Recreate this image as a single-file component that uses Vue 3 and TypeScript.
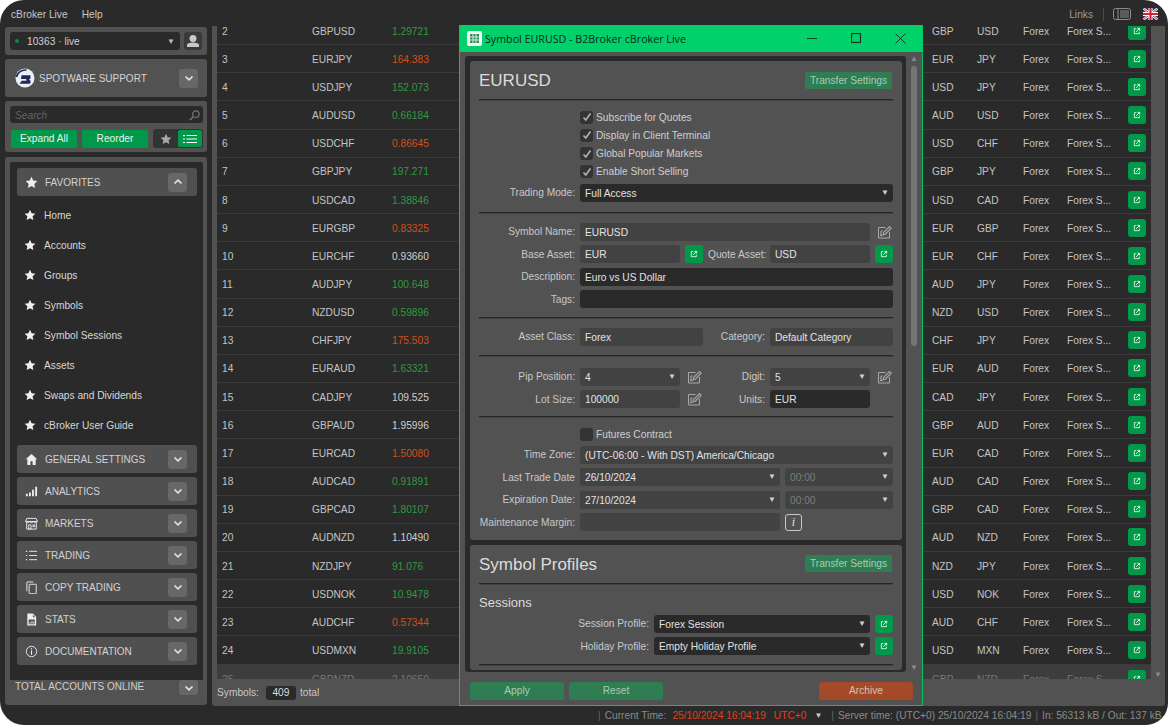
<script setup lang="ts">
interface Quote {
  id: number;
  symbol: string;
  price: string;
  dir: 'up' | 'down' | 'flat';
}

const quotes: Quote[] = [
  { id: 2, symbol: 'GBPUSD', price: '1.29721', dir: 'up' },
  { id: 3, symbol: 'EURJPY', price: '164.383', dir: 'down' },
  { id: 4, symbol: 'USDJPY', price: '152.073', dir: 'up' },
  { id: 5, symbol: 'AUDUSD', price: '0.66184', dir: 'up' },
  { id: 6, symbol: 'USDCHF', price: '0.86645', dir: 'down' },
  { id: 7, symbol: 'GBPJPY', price: '197.271', dir: 'up' },
  { id: 8, symbol: 'USDCAD', price: '1.38846', dir: 'up' },
  { id: 9, symbol: 'EURGBP', price: '0.83325', dir: 'down' },
  { id: 10, symbol: 'EURCHF', price: '0.93660', dir: 'flat' },
  { id: 11, symbol: 'AUDJPY', price: '100.648', dir: 'up' },
  { id: 12, symbol: 'NZDUSD', price: '0.59896', dir: 'up' },
  { id: 13, symbol: 'CHFJPY', price: '175.503', dir: 'down' },
  { id: 14, symbol: 'EURAUD', price: '1.63321', dir: 'up' },
  { id: 15, symbol: 'CADJPY', price: '109.525', dir: 'flat' },
  { id: 16, symbol: 'GBPAUD', price: '1.95996', dir: 'flat' },
  { id: 17, symbol: 'EURCAD', price: '1.50080', dir: 'down' },
  { id: 18, symbol: 'AUDCAD', price: '0.91891', dir: 'up' },
  { id: 19, symbol: 'GBPCAD', price: '1.80107', dir: 'up' },
  { id: 20, symbol: 'AUDNZD', price: '1.10490', dir: 'flat' },
  { id: 21, symbol: 'NZDJPY', price: '91.076', dir: 'up' },
  { id: 22, symbol: 'USDNOK', price: '10.9478', dir: 'up' },
  { id: 23, symbol: 'AUDCHF', price: '0.57344', dir: 'down' },
  { id: 24, symbol: 'USDMXN', price: '19.9105', dir: 'up' },
  { id: 25, symbol: 'GBPNZD', price: '2.10650', dir: 'flat' },
];

const favorites = [
  'Home',
  'Accounts',
  'Groups',
  'Symbols',
  'Symbol Sessions',
  'Assets',
  'Swaps and Dividends',
  'cBroker User Guide',
];

const sections = [
  { name: 'GENERAL SETTINGS', icon: 'i-home' },
  { name: 'ANALYTICS', icon: 'i-bars' },
  { name: 'MARKETS', icon: 'i-store' },
  { name: 'TRADING', icon: 'i-list' },
  { name: 'COPY TRADING', icon: 'i-copy' },
  { name: 'STATS', icon: 'i-file' },
  { name: 'DOCUMENTATION', icon: 'i-info' },
];

const checks = ['Subscribe for Quotes', 'Display in Client Terminal', 'Global Popular Markets', 'Enable Short Selling'];
</script>

<template>
  <div class="window">
    <!-- shared icons -->
    <svg class="sprite" aria-hidden="true">
      <symbol id="i-star" viewBox="0 0 24 24">
        <path fill="currentColor" d="M12 1.5l3.2 7 7.6.9-5.6 5.2 1.5 7.6L12 18.4l-6.7 3.8 1.5-7.6L1.200 9.400l7.600-.9z" />
      </symbol>
      <symbol id="i-down" viewBox="0 0 12 12">
        <path fill="none" stroke="currentColor" stroke-width="1.700" d="M2.500 4.500L6 7.800l3.500-3.300" />
      </symbol>
      <symbol id="i-up" viewBox="0 0 12 12">
        <path fill="none" stroke="currentColor" stroke-width="1.700" d="M2.500 7.500L6 4.200l3.500 3.300" />
      </symbol>
      <symbol id="i-ext" viewBox="0 0 12 12">
        <path fill="none" stroke="currentColor" stroke-width="1.300" d="M5 2.500H2v7.500h7.500V7" />
        <path fill="none" stroke="currentColor" stroke-width="1.500" d="M4.800 7.200L9.500 2.500M6.800 2h3.200v3.200" />
      </symbol>
      <symbol id="i-edit" viewBox="0 0 15 14">
        <path fill="none" stroke="currentColor" stroke-width="1" d="M8.500 2.500H1.500v10.500h11V7" />
        <path fill="none" stroke="currentColor" stroke-width="1.100" d="M6 9.800l.6-2.300L12.500 1.500l1.700 1.700L8.300 9.200zM4 6h1.500M4 6v4.500M3 10.500h2.500" />
      </symbol>
      <symbol id="i-home" viewBox="0 0 14 14">
        <path fill="currentColor" d="M7 1L.8 6.800h1.700V13h3.300V9h2.400v4h3.300V6.800h1.700z" />
      </symbol>
      <symbol id="i-bars" viewBox="0 0 14 14">
        <path fill="currentColor" d="M1 9.500h2V12H1zM4.300 8h2v4h-2zM7.600 5h2v7h-2zM11 2h2v10h-2z" />
      </symbol>
      <symbol id="i-store" viewBox="0 0 14 14">
        <path fill="none" stroke="currentColor" stroke-width="1" d="M2 1.500h10l1.300 3.300H.7zM.7 4.800c0 1.700 4.200 1.700 4.200 0 0 1.700 4.200 1.700 4.200 0 0 1.700 4.200 1.700 4.200 0M1.800 6.500v6.500h10.400V6.500M4 8.500h2.500V13H4zM8.500 8.500h2v2h-2z" />
      </symbol>
      <symbol id="i-list" viewBox="0 0 14 14">
        <path fill="none" stroke="currentColor" stroke-width="1" d="M4.500 2.500H13M4.500 7H13M4.500 11.500H13" />
        <path fill="currentColor" d="M1 2h1.300v1.200H1zM1 6.400h1.300v1.200H1zM1 10.900h1.300v1.200H1z" />
      </symbol>
      <symbol id="i-copy" viewBox="0 0 14 14">
        <path fill="none" stroke="currentColor" stroke-width="1" d="M5 3.500h6.500a.6.600 0 0 1 .6.600v9a.6.600 0 0 1-.6.600H5a.6.600 0 0 1-.6-.6v-9a.6.600 0 0 1 .6-.6zM2 11V1.600A.6.600 0 0 1 2.600 1H9" />
      </symbol>
      <symbol id="i-file" viewBox="0 0 14 14">
        <path fill="currentColor" d="M2.500.500h6l3.500 3.500v9.500H2.500zM4 7v5h6.500V7zm4.500-5v2.500H11zM5 10h1v1.500H5zm2-1.500h1v3H7zm2 .7h.800v2.300H9z" fill-rule="evenodd" />
      </symbol>
      <symbol id="i-info" viewBox="0 0 14 14">
        <circle cx="7" cy="7" r="5.600" fill="none" stroke="currentColor" stroke-width="1" />
        <path fill="currentColor" d="M6.400 6h1.200v4.500H6.400zM6.400 3.500h1.200v1.300H6.400z" />
      </symbol>
    </svg>

    <header class="topbar">
      <span class="menu-item">cBroker Live</span>
      <span class="menu-item help">Help</span>
      <span class="links">Links</span>
      <span class="sep"></span>
      <svg class="panel-icon" width="18" height="12" viewBox="0 0 18 12">
        <rect x=".5" y=".5" width="17" height="11" rx="2" fill="none" stroke="#8c8c8c" />
        <path d="M5 1v10" stroke="#8c8c8c" />
        <path d="M7 3h9M7 5h9M7 7h9M7 9h9" stroke="#8c8c8c" />
      </svg>
      <svg class="flag" width="15" height="12" viewBox="0 0 15 12">
        <rect width="15" height="12" fill="#27337e" />
        <path d="M0 0l15 12M15 0L0 12" stroke="#fff" stroke-width="2.400" />
        <path d="M0 0l15 12M15 0L0 12" stroke="#d3232e" stroke-width="1" />
        <path d="M7.500 0v12M0 6h15" stroke="#fff" stroke-width="4" />
        <path d="M7.500 0v12M0 6h15" stroke="#d3232e" stroke-width="2.200" />
      </svg>
    </header>

    <div class="main">
      <aside class="sidebar">
        <div class="panel account">
          <div class="account-select">
            <span class="dot"></span>
            <span>10363 · live</span>
            <span class="caret">▼</span>
          </div>
          <div class="user-btn">
            <svg width="14" height="14" viewBox="0 0 14 14">
              <circle cx="7" cy="4.500" r="3.500" fill="#c9c9c9" />
              <path d="M1 13v-2.200C1 9.500 4 8.500 7 8.500s6 1 6 2.300V13z" fill="#c9c9c9" />
            </svg>
          </div>
        </div>

        <div class="panel support">
          <svg class="logo" width="20" height="20" viewBox="0 0 20 20">
            <circle cx="10" cy="10" r="9.500" fill="#eceef3" />
            <path d="M1.500 9C2.500 4.500 6.500 1.500 11.500 2" fill="none" stroke="#1e2a5c" stroke-width="1.600" />
            <path d="M6.500 7.200h9v3.300l-1.600 1.100 1.600 1.100v1.500c0 1-1 1.600-2 1.600H4.500l2.300-3.100h5l-1-.9 1-.9H6z" fill="#1e2a5c" />
          </svg>
          <span class="support-name">SPOTWARE SUPPORT</span>
          <span class="chev-btn"><svg width="12" height="12"><use href="#i-down" /></svg></span>
        </div>

        <div class="panel tools">
          <div class="search">
            <span>Search</span>
            <svg width="11" height="11" viewBox="0 0 12 12">
              <circle cx="7.500" cy="4.500" r="3.500" fill="none" stroke="#777" stroke-width="1.300" />
              <path d="M5 7L1 11" stroke="#777" stroke-width="1.600" />
            </svg>
          </div>
          <div class="tool-row">
            <span class="btn">Expand All</span>
            <span class="btn">Reorder</span>
            <div class="view-toggle">
              <span class="toggle-star"><svg width="12" height="12"><use href="#i-star" /></svg></span>
              <span class="toggle-list">
                <svg width="14" height="10" viewBox="0 0 14 10">
                  <path d="M3.500 1.500H14M3.500 5H14M3.500 8.500H14" stroke="#fff" stroke-width="1.200" />
                  <path d="M0 1h2v1.200H0zM0 4.400h2v1.200H0zM0 7.900h2v1.200H0z" fill="#fff" />
                </svg>
              </span>
            </div>
          </div>
        </div>

        <div class="panel nav-panel">
          <nav class="nav">
            <div class="section">
              <svg class="section-icon" width="13" height="13"><use href="#i-star" /></svg>
              <span>FAVORITES</span>
              <span class="chev-btn"><svg width="12" height="12"><use href="#i-up" /></svg></span>
            </div>
            <ul class="fav-list">
              <li v-for="item in favorites" :key="item">
                <svg width="12" height="12"><use href="#i-star" /></svg>
                {{ item }}
              </li>
            </ul>
            <div v-for="s in sections" :key="s.name" class="section closed">
              <svg class="section-icon" width="13" height="13"><use :href="'#' + s.icon" /></svg>
              <span>{{ s.name }}</span>
              <span class="chev-btn"><svg width="12" height="12"><use href="#i-down" /></svg></span>
            </div>
          </nav>
          <div class="total-row">
            <span>TOTAL ACCOUNTS ONLINE</span>
            <span class="chev-btn short"><svg width="12" height="12"><use href="#i-down" /></svg></span>
          </div>
        </div>
      </aside>

      <section class="content">
        <div class="table-wrap">
          <div class="table">
            <div v-for="q in quotes" :key="q.id" class="tr" :class="{ last: q.id === 25 }">
              <span>{{ q.id }}</span>
              <span>{{ q.symbol }}</span>
              <span :class="q.dir">{{ q.price }}</span>
              <span></span>
              <span>{{ q.symbol.slice(0, 3) }}</span>
              <span>{{ q.symbol.slice(3) }}</span>
              <span>Forex</span>
              <span>Forex S...</span>
              <span class="ext-btn"><svg width="8" height="8"><use href="#i-ext" /></svg></span>
            </div>
          </div>
          <div class="table-scroll"><span class="arrow-down">▼</span></div>
        </div>
        <div class="table-footer">
          <span>Symbols:</span>
          <span class="count">409</span>
          <span>total</span>
        </div>
      </section>
    </div>

    <footer class="status">
      <span class="bar">|</span>
      <span>Current Time:</span>
      <span class="red date-time">25/10/2024 16:04:19</span>
      <span class="red">UTC+0</span>
      <span class="status-caret">▼</span>
      <span class="bar">|</span>
      <span>Server time: (UTC+0) 25/10/2024 16:04:19</span>
      <span class="bar">|</span>
      <span>In: 56313 kB / Out: 137 kB</span>
    </footer>

    <!-- floating symbol window -->
    <div class="modal">
      <div class="titlebar">
        <svg class="app-icon" width="15" height="15" viewBox="0 0 15 15">
          <rect width="15" height="15" rx="2" fill="#f4f8f4" />
          <path d="M3 3h9v9H3z" fill="#2c8c5a" />
          <path d="M3 6h9M3 9h9M6 3v9M9 3v9" stroke="#d6ecd9" />
        </svg>
        <span class="title">Symbol EURUSD - B2Broker cBroker Live</span>
        <svg class="win-btn min" width="11" height="11" viewBox="0 0 11 11"><path d="M0 5.500h10" stroke="#0f4a2c" /></svg>
        <svg class="win-btn max" width="11" height="11" viewBox="0 0 11 11"><rect x=".5" y=".5" width="9" height="9" fill="none" stroke="#0f3a24" stroke-width="1.200" /></svg>
        <svg class="win-btn close" width="11" height="11" viewBox="0 0 11 11"><path d="M.5.500l10 10M10.500.500l-10 10" stroke="#0f3a24" /></svg>
      </div>

      <div class="modal-body">
        <div class="sheet">
          <div class="card first">
            <div class="card-head">
              <h2>EURUSD</h2>
              <span class="transfer">Transfer Settings</span>
            </div>
            <div class="hr head-hr"></div>

            <div class="checks">
              <label v-for="c in checks" :key="c" class="check">
                <span class="box">
                  <svg width="10" height="10" viewBox="0 0 10 10"><path d="M1.500 5.500l2.300 2.500 4.700-6.500" fill="none" stroke="#b4b4b4" stroke-width="1.600" /></svg>
                </span>
                {{ c }}
              </label>
            </div>
            <div class="f mt5">
              <span class="lbl">Trading Mode:</span>
              <div class="ctl dark wide select">Full Access<i>▼</i></div>
            </div>
            <div class="hr m10"></div>

            <div class="f mt10">
              <span class="lbl">Symbol Name:</span>
              <div class="ctl grey to-col5">EURUSD</div>
              <svg class="edit" width="15" height="14"><use href="#i-edit" /></svg>
            </div>
            <div class="f mt45">
              <span class="lbl">Base Asset:</span>
              <div class="ctl grey">EUR</div>
              <span class="ext-btn"><svg width="8" height="8"><use href="#i-ext" /></svg></span>
              <span class="lbl">Quote Asset:</span>
              <div class="ctl grey">USD</div>
              <span class="ext-btn"><svg width="8" height="8"><use href="#i-ext" /></svg></span>
            </div>
            <div class="f mt45">
              <span class="lbl">Description:</span>
              <div class="ctl dark wide">Euro vs US Dollar</div>
            </div>
            <div class="f mt45">
              <span class="lbl">Tags:</span>
              <div class="ctl dark wide"></div>
            </div>
            <div class="hr m85"></div>

            <div class="f mt10">
              <span class="lbl">Asset Class:</span>
              <div class="ctl grey to-col3">Forex</div>
              <span class="lbl">Category:</span>
              <div class="ctl grey to-end">Default Category</div>
            </div>
            <div class="hr m9"></div>

            <div class="f mt12">
              <span class="lbl">Pip Position:</span>
              <div class="ctl grey select">4<i>▼</i></div>
              <svg class="edit" width="15" height="14"><use href="#i-edit" /></svg>
              <span class="lbl">Digit:</span>
              <div class="ctl grey select">5<i>▼</i></div>
              <svg class="edit" width="15" height="14"><use href="#i-edit" /></svg>
            </div>
            <div class="f mt45">
              <span class="lbl">Lot Size:</span>
              <div class="ctl grey">100000</div>
              <svg class="edit" width="15" height="14"><use href="#i-edit" /></svg>
              <span class="lbl">Units:</span>
              <div class="ctl dark">EUR</div>
            </div>
            <div class="hr m75"></div>

            <label class="check futures"><span class="box"></span>Futures Contract</label>
            <div class="f mt4">
              <span class="lbl">Time Zone:</span>
              <div class="ctl grey wide select">(UTC-06:00 - With DST) America/Chicago<i>▼</i></div>
            </div>
            <div class="f date mt45">
              <span class="lbl">Last Trade Date</span>
              <div class="ctl grey select">26/10/2024<i>▼</i></div>
              <div class="ctl grey select muted">00:00<i>▼</i></div>
            </div>
            <div class="f date mt45">
              <span class="lbl">Expiration Date:</span>
              <div class="ctl grey select">27/10/2024<i>▼</i></div>
              <div class="ctl grey select muted">00:00<i>▼</i></div>
            </div>
            <div class="f date mt45">
              <span class="lbl">Maintenance Margin:</span>
              <div class="ctl grey"></div>
              <span class="info-btn">i</span>
            </div>
          </div>

          <div class="card second">
            <div class="card-head">
              <h2>Symbol Profiles</h2>
              <span class="transfer">Transfer Settings</span>
            </div>
            <div class="hr head-hr"></div>
            <h3>Sessions</h3>
            <div class="f profile mt4">
              <span class="lbl">Session Profile:</span>
              <div class="ctl dark select">Forex Session<i>▼</i></div>
              <span class="ext-btn"><svg width="8" height="8"><use href="#i-ext" /></svg></span>
            </div>
            <div class="f profile mt45">
              <span class="lbl">Holiday Profile:</span>
              <div class="ctl dark select">Empty Holiday Profile<i>▼</i></div>
              <span class="ext-btn"><svg width="8" height="8"><use href="#i-ext" /></svg></span>
            </div>
            <div class="hr m85"></div>
          </div>
        </div>

        <div class="modal-scroll">
          <span class="sb-arrow">▲</span>
          <div class="thumb"></div>
          <span class="sb-arrow bottom">▼</span>
        </div>
      </div>

      <div class="modal-footer">
        <span class="action green">Apply</span>
        <span class="action green">Reset</span>
        <span class="action orange">Archive</span>
      </div>
    </div>
  </div>
</template>

<style>
html,
body {
  margin: 0;
  background: #fff;
}
</style>

<style scoped>
.sprite {
  display: none;
}

.window {
  position: relative;
  width: 1168px;
  height: 725px;
  background: #2a2a2a;
  border-radius: 24px 24px 22px 24px;
  overflow: hidden;
  display: flex;
  flex-direction: column;
  font-family: 'Liberation Sans', Arial, sans-serif;
  font-size: 10.2px;
  color: #c8c8c8;
}

.topbar {
  height: 26px;
  flex: none;
  display: flex;
  align-items: center;
  padding: 2px 10px 0 11px;
  box-sizing: border-box;
}

.help {
  margin-left: 14px;
}

.links {
  margin-left: auto;
  color: #9a9a9a;
}

.sep {
  width: 1px;
  height: 13px;
  background: #4a4a4a;
  margin: 0 9px 0 10px;
}

.flag {
  margin-left: 12px;
}

.main {
  flex: 1;
  display: flex;
  gap: 5px;
  padding: 0 3px 0 5px;
  min-height: 0;
}

.panel {
  background: #525252;
  border-radius: 3px;
}

.sidebar {
  width: 202px;
  flex: none;
  display: flex;
  flex-direction: column;
  gap: 4px;
  padding-top: 1px;
  box-sizing: border-box;
}

.account {
  height: 28px;
  display: flex;
  align-items: center;
  padding: 0 5px;
  gap: 4px;
}

.account-select {
  flex: 1;
  height: 18px;
  background: #2a2a2a;
  border-radius: 3px;
  display: flex;
  align-items: center;
  padding: 0 5px;
  color: #d0d0d0;
}

.dot {
  width: 4px;
  height: 4px;
  border-radius: 50%;
  background: #0f8a3e;
  margin-right: 8px;
}

.caret {
  margin-left: auto;
  font-size: 8px;
  color: #bdbdbd;
}

.user-btn {
  width: 18px;
  height: 18px;
  background: #3a3a3a;
  border-radius: 3px;
  display: flex;
  align-items: center;
  justify-content: center;
}

.support {
  height: 38px;
  display: flex;
  align-items: center;
  padding: 0 9px 0 10px;
  font-size: 10px;
  color: #d4d4d4;
}

.support-name {
  margin-left: 4px;
  flex: 1;
}

.chev-btn {
  width: 19px;
  height: 19px;
  background: #676767;
  border-radius: 3px;
  display: flex;
  align-items: center;
  justify-content: center;
  color: #e4e4e4;
  flex: none;
}

.chev-btn.short {
  height: 15px;
}

.tools {
  height: 51px;
  padding: 5px 4px 5px 5px;
  box-sizing: border-box;
}

.search {
  height: 17px;
  background: #2a2a2a;
  border-radius: 3px;
  display: flex;
  align-items: center;
  justify-content: space-between;
  padding: 1px 3px 0 5px;
  box-sizing: border-box;
  font-style: italic;
  color: #666;
}

.tool-row {
  display: flex;
  align-items: center;
  margin-top: 6px;
  padding-left: 1px;
}

.btn {
  width: 66px;
  height: 18px;
  background: #00994a;
  border-radius: 2px;
  margin-right: 5px;
  display: flex;
  align-items: center;
  justify-content: center;
  color: #e8f4ea;
}

.view-toggle {
  width: 50px;
  height: 19px;
  background: #333;
  border-radius: 3px;
  display: flex;
  align-items: center;
  padding: 0 1px 0 0;
  box-sizing: border-box;
}

.toggle-star {
  width: 25px;
  display: flex;
  justify-content: center;
  color: #a8a8a8;
}

.toggle-list {
  width: 24px;
  height: 17px;
  background: #00994a;
  border-radius: 2px;
  display: flex;
  align-items: center;
  justify-content: center;
}

.nav-panel {
  height: 548px;
  padding: 5px 4px 0 5px;
  box-sizing: border-box;
  margin-top: 1px;
}

.nav {
  height: 518px;
  background: #2a2a2a;
  padding: 6px 6px 0 7px;
  box-sizing: border-box;
  border-radius: 2px 2px 0 0;
}

.section {
  height: 28px;
  background: #505050;
  border-radius: 3px;
  display: flex;
  align-items: center;
  padding: 0 10px 0 8px;
  font-size: 10px;
  color: #d2d2d2;
}

.section > span:not(.chev-btn) {
  flex: 1;
  margin-left: 7px;
}

.section-icon {
  color: #eee;
  flex: none;
}

.section.closed {
  margin-bottom: 4px;
}

.fav-list {
  list-style: none;
  margin: 4px 0 5px;
  padding: 0;
}

.fav-list li {
  height: 30px;
  display: flex;
  align-items: center;
  gap: 8px;
  padding-left: 7px;
  color: #d8d8d8;
}

.fav-list svg {
  color: #f0f0f0;
}

.total-row {
  height: 25px;
  display: flex;
  justify-content: space-between;
  padding: 0 5px;
  box-sizing: border-box;
  font-size: 10px;
  color: #cfcfcf;
  line-height: 14px;
}

.content {
  flex: 1;
  min-width: 0;
  display: flex;
  flex-direction: column;
}

.table-wrap {
  height: 653px;
  background: #525252;
  display: flex;
  padding-left: 5px;
}

.table {
  flex: 1;
  background: #2a2a2a;
  overflow: hidden;
  border-radius: 0 0 3px 0;
}

.table-scroll {
  width: 14px;
  display: flex;
  align-items: flex-end;
  justify-content: center;
  color: #8a8a8a;
}

.arrow-down {
  font-size: 8px;
}

.tr {
  height: 28.17px;
  box-sizing: border-box;
  display: grid;
  grid-template-columns: 90px 80px 60px 480px 45px 46px 44px 61px 18px;
  align-items: center;
  padding-left: 5px;
  border-bottom: 1px solid #3a3a3a;
  color: #c4c4c4;
}

.tr > span:not(.ext-btn) {
  padding-top: 1px;
}

.tr:first-child {
  margin-top: -9px;
}

.tr.last {
  background: #3d3d3d;
  color: #777;
  border-bottom: 0;
}

.up {
  color: #2f9a41;
}

.down {
  color: #d2501a;
}

.flat {
  color: #cfcfcf;
}

.last .flat {
  color: #777;
}

.ext-btn {
  width: 18px;
  height: 18px;
  background: #00994a;
  border-radius: 3px;
  display: flex;
  align-items: center;
  justify-content: center;
  color: #e8f6ec;
}

.table-footer {
  height: 27px;
  background: #525252;
  border-radius: 0 0 3px 3px;
  display: flex;
  align-items: center;
  padding-left: 5px;
  color: #c8c8c8;
}

.count {
  width: 30px;
  height: 14px;
  background: #2a2a2a;
  border-radius: 3px;
  margin: 0 4px 0 7px;
  text-align: center;
  line-height: 14px;
  color: #ddd;
}

.status {
  height: 19px;
  flex: none;
  display: flex;
  align-items: center;
  padding-left: 598px;
  white-space: nowrap;
  color: #8a8a8a;
}

.bar {
  margin-right: 4px;
  color: #666;
}

.status > span:not(.bar) {
  margin-right: 4px;
}

.red {
  color: #e0401a;
}

.status > span.date-time {
  margin-left: 2px;
  margin-right: 8px;
}

.status > span.status-caret {
  font-size: 8px;
  color: #c8c8c8;
  margin-left: 4px;
  margin-right: 9px;
}

.modal {
  position: absolute;
  left: 459px;
  top: 25px;
  width: 464px;
  height: 681px;
  box-sizing: border-box;
  border: 1px solid #00c566;
  border-top: 0;
  background: #525252;
  display: flex;
  flex-direction: column;
}

.titlebar {
  height: 27px;
  flex: none;
  background: #00d16b;
  display: flex;
  align-items: center;
  padding-left: 7px;
  color: #0c2a1a;
}

.title {
  font-family: 'Open Sans', 'Noto Sans', sans-serif;
  font-size: 10.7px;
  margin-left: 3px;
  flex: 1;
}

.win-btn {
  flex: none;
}

.min {
  margin-right: 33px;
}

.max {
  margin-right: 33px;
}

.close {
  margin-right: 16px;
}

.modal-body {
  flex: 1;
  min-height: 0;
  display: flex;
  padding: 4px 0 0 5px;
}

.sheet {
  width: 441px;
  flex: none;
  height: 616px;
  background: #2a2a2a;
  border-radius: 3px;
  padding: 5px 4px 2px 5px;
  box-sizing: border-box;
  display: flex;
  flex-direction: column;
  gap: 5px;
  overflow: hidden;
}

.card {
  background: #525252;
  border-radius: 3px;
  padding: 10px 9px 8.5px;
}

.card.second {
  flex: 1;
  min-height: 0;
}

.card-head {
  display: flex;
  align-items: center;
  justify-content: space-between;
  height: 18px;
}

h2 {
  margin: 2px 0 0;
  font-size: 17px;
  font-weight: 400;
  color: #dcdcdc;
}

h3 {
  margin: 11px 0 0;
  font-size: 13px;
  font-weight: 400;
  line-height: 16px;
  color: #dcdcdc;
}

.transfer {
  height: 17px;
  width: 87px;
  margin-right: 1px;
  background: #2f7d52;
  border-radius: 2px;
  display: flex;
  align-items: center;
  justify-content: center;
  color: #a9ccb4;
}

.hr {
  height: 1px;
  background: #262626;
  box-shadow: 0 1px 0 rgba(40, 40, 40, 0.4);
}

.head-hr {
  margin-top: 10px;
}

.m10 {
  margin-top: 10px;
}

.m85 {
  margin-top: 8.5px;
}

.m9 {
  margin-top: 9px;
}

.m75 {
  margin-top: 7.5px;
}

.mt4 {
  margin-top: 4px;
}

.mt45 {
  margin-top: 4.5px;
}

.mt5 {
  margin-top: 5px;
}

.mt10 {
  margin-top: 10px;
}

.mt12 {
  margin-top: 12px;
}

.checks {
  margin-top: 10px;
  padding-left: 101px;
  display: flex;
  flex-direction: column;
  gap: 4.33px;
}

.check {
  height: 14px;
  display: flex;
  align-items: center;
  gap: 3px;
  color: #cfcfcf;
}

.box {
  width: 13px;
  height: 13px;
  background: #333;
  border-radius: 3px;
  display: flex;
  align-items: center;
  justify-content: center;
}

.futures {
  margin: 11px 0 0 101px;
}

.f {
  display: grid;
  grid-template-columns: 96px 100px 18px 57px 100px 18px;
  column-gap: 5px;
  height: 18px;
  align-items: center;
}

.f.date {
  grid-template-columns: 96px 200px 108px;
}

.f.profile {
  grid-template-columns: 170px 216px 18px;
}

.lbl {
  text-align: right;
  color: #c8c8c8;
  white-space: nowrap;
}

.ctl {
  height: 18px;
  line-height: 19px;
  border-radius: 3px;
  padding: 0 5px;
  box-sizing: border-box;
  position: relative;
  color: #e2e2e2;
}

.dark {
  background: #2a2a2a;
}

.grey {
  background: #424242;
}

.muted {
  color: #7d7d7d;
}

.wide {
  grid-column: 2 / -1;
}

.to-col3 {
  grid-column: 2 / 4;
}

.to-col5 {
  grid-column: 2 / 6;
}

.to-end {
  grid-column: 5 / 7;
}

.select i {
  position: absolute;
  right: 4px;
  top: -1px;
  font-style: normal;
  font-size: 8px;
  color: #cfcfcf;
}

.edit {
  color: #a8a8a8;
  justify-self: center;
}

.info-btn {
  width: 17px;
  height: 17px;
  box-sizing: border-box;
  border: 1px solid #c8c8c8;
  border-radius: 3px;
  font-family: 'Liberation Serif', serif;
  font-style: italic;
  font-size: 12px;
  line-height: 15px;
  text-align: center;
  color: #e4e4e4;
}

.modal-scroll {
  flex: 1;
  position: relative;
  height: 616px;
  display: flex;
  flex-direction: column;
  align-items: center;
  color: #8a8a8a;
}

.sb-arrow {
  font-size: 8px;
  line-height: 8px;
  height: 8px;
  margin: -1px 0 0;
}

.sb-arrow.bottom {
  margin-top: auto;
}

.thumb {
  width: 6px;
  height: 280px;
  margin-top: 3px;
  background: #757575;
  border-radius: 3px;
}

.modal-footer {
  height: 32px;
  flex: none;
  display: flex;
  align-items: center;
  padding: 3px 9px 0 10px;
  box-sizing: border-box;
  gap: 5px;
}

.action {
  width: 94px;
  height: 18px;
  border-radius: 3px;
  display: flex;
  align-items: center;
  justify-content: center;
}

.action.green {
  background: #2f7d52;
  color: #a9ccb4;
}

.action.orange {
  background: #a44a28;
  color: #dcc0b0;
  margin-left: auto;
}
</style>
